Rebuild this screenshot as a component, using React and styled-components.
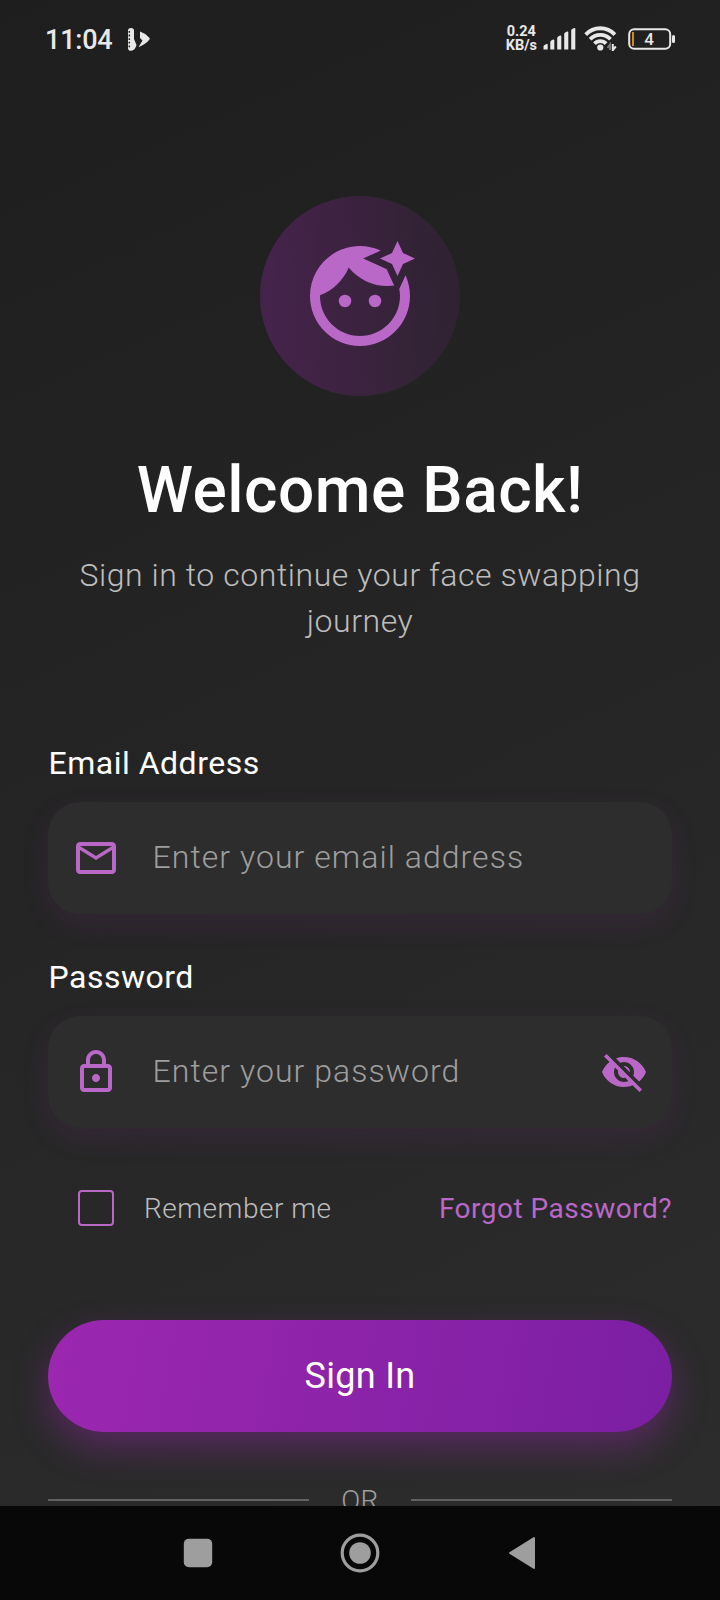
import React from "react";
import styled, { createGlobalStyle } from "styled-components";
import {
  MdFaceRetouchingNatural,
  MdOutlineEmail,
  MdOutlineLock,
  MdVisibilityOff,
} from "react-icons/md";

const GlobalStyle = createGlobalStyle`
  * { box-sizing: border-box; }
  body { margin: 0; background: #1e1e1e; }
`;

const Screen = styled.div`
  width: 720px;
  height: 1600px;
  overflow: hidden;
  display: flex;
  flex-direction: column;
  background: linear-gradient(155.8deg, #1e1e1e, #2d2d2d);
  font-family: Roboto, "Liberation Sans", sans-serif;
  color: #fff;
`;

const StatusBar = styled.header`
  flex: none;
  height: 78px;
  padding: 0 44px 0 45px;
  display: flex;
  align-items: center;
  justify-content: space-between;
  color: #e8e8e8;
`;

const StatusGroup = styled.div`
  display: flex;
  align-items: center;
`;

const Clock = styled.span`
  padding-top: 1px;
  font-size: 27px;
  font-weight: 500;
  line-height: 32px;
  letter-spacing: -0.2px;
  margin-right: 14px;
`;

const NetSpeed = styled.span`
  font-size: 14.5px;
  font-weight: 700;
  line-height: 14px;
  text-align: center;
  white-space: pre-line;
  margin-right: 6px;
`;

const StatusIcon = styled.svg`
  display: block;
  margin-left: ${(p) => p.$gap || 0}px;
`;

const Content = styled.main`
  flex: 1;
  min-height: 0;
  overflow: hidden;
  padding: 118px 48px 0;
  display: flex;
  flex-direction: column;
`;

const Logo = styled.div`
  flex: none;
  align-self: center;
  width: 200px;
  height: 200px;
  border-radius: 50%;
  display: grid;
  place-items: center;
  color: #ba68c8;
  background: linear-gradient(90deg, rgba(156, 39, 176, 0.3), rgba(156, 39, 176, 0.1));
`;

const Title = styled.h1`
  margin: 49px 0 0;
  font-size: 64px;
  font-weight: 500;
  line-height: 92px;
  letter-spacing: 0.5px;
  text-align: center;
`;

const Subtitle = styled.p`
  margin: 15px 0 0;
  font-size: 32px;
  font-weight: 300;
  line-height: 46px;
  letter-spacing: 0.56px;
  text-align: center;
  color: #bdbdbd;
`;

const Field = styled.div`
  display: flex;
  flex-direction: column;
  gap: 16px;
  margin-top: ${(p) => p.$top}px;
`;

const Label = styled.label`
  padding-left: 0.5px;
  font-size: 32px;
  font-weight: 400;
  line-height: 46px;
  letter-spacing: 0.5px;
`;

const InputBox = styled.div`
  height: 112px;
  padding: 0 24px;
  display: flex;
  align-items: center;
  border-radius: 32px;
  background: #2d2d2d;
  box-shadow: 0 10px 28px rgba(156, 39, 176, 0.12);
  color: #ba68c8;
`;

const Placeholder = styled.span`
  flex: 1;
  margin-left: 32.5px;
  padding-bottom: 2px;
  font-size: 32px;
  font-weight: 300;
  letter-spacing: 1.04px;
  color: #9e9e9e;
`;

const Options = styled.div`
  margin-top: 62px;
  height: 36px;
  padding-left: 30px;
  display: flex;
  align-items: center;
`;

const Checkbox = styled.span`
  width: 36px;
  height: 36px;
  border: 2px solid #ba68c8;
  border-radius: 4px;
`;

const Remember = styled.span`
  flex: 1;
  margin-left: 30px;
  font-size: 28px;
  font-weight: 300;
  letter-spacing: 0.5px;
  color: #bdbdbd;
`;

const Forgot = styled.a`
  font-size: 28px;
  font-weight: 400;
  letter-spacing: 0.5px;
  color: #ba68c8;
`;

const SignIn = styled.button`
  flex: none;
  margin-top: 94px;
  height: 112px;
  border: 0;
  border-radius: 56px;
  background: linear-gradient(100.2deg, #9c27b0, #7b1fa2);
  box-shadow: 0 16px 36px rgba(156, 39, 176, 0.4);
  color: #fff;
  font-family: inherit;
  font-size: 36px;
  font-weight: 400;
  letter-spacing: 0.3px;
`;

const Divider = styled.div`
  flex: none;
  margin-top: 48px;
  height: 40px;
  display: flex;
  align-items: center;
  gap: 32px;
  font-size: 28px;
  font-weight: 300;
  letter-spacing: 0.5px;
  color: #9e9e9e;
`;

const Rule = styled.span`
  flex: 1;
  height: 2px;
  background: #616161;
`;

const NavBar = styled.nav`
  flex: none;
  height: 94px;
  background: #080808;
  display: flex;
  justify-content: center;
  align-items: center;
`;

const NavSlot = styled.span`
  width: 162px;
  display: grid;
  place-items: center;
`;

export default function App() {
  return (
    <Screen>
      <GlobalStyle />
      <StatusBar>
        <StatusGroup>
          <Clock>11:04</Clock>
          <StatusIcon width="24" height="25" viewBox="0 0 24 25" fill="#e8e8e8">
            <path d="M1 3.500Q1 1 4 1t3 2.500V12l2.500 6q-1.500 5.500-5.200 5.800Q1 24 1 21z" />
            <path d="M13 4.500q5 1.500 9.300 6.300 1 1 0 2Q19 17 11.500 20.300L15.500 13.500 13 11z" />
            <path d="M2.300 4v17" stroke="#222" strokeWidth="1.500" strokeDasharray="1.800 1.800" />
          </StatusIcon>
        </StatusGroup>
        <StatusGroup>
          <NetSpeed>{"0.24\nKB/s"}</NetSpeed>
          <StatusIcon width="33" height="23" viewBox="0 0 33 23" fill="#e8e8e8">
            <path d="M.500 21.500v-3q0-1 1-1.500l2-1q1.200-.500 1.200.800v4.700z" />
            <path d="M7.300 21.500V14q0-1 1-1.500l1.800-.900q1.200-.500 1.200.800v9.100z" />
            <path d="M14.200 21.500V10q0-1 1-1.500l1.900-.900q1.200-.500 1.200.800v13.100z" />
            <path d="M21.200 21.500V6q0-1 1-1.500l1.900-.900q1.200-.500 1.200.800v17.100z" />
            <path d="M28.200 21.500V2.500q0-1 1-1.500l1.900-.900q1.200-.500 1.200.800v20.600z" />
          </StatusIcon>
          <StatusIcon $gap={8} width="34" height="26" viewBox="0 0 34 26" fill="none" stroke="#e8e8e8" strokeWidth="3.800">
            <path d="M1.700 8.600a20 20 0 0 1 29.200 0" />
            <path d="M6.100 13.200a14 14 0 0 1 20.400 0" />
            <path d="M10.500 17.600a8 8 0 0 1 11.600 0" />
            <circle cx="16.300" cy="21.500" r="3.100" fill="#e8e8e8" stroke="none" />
            <path d="M26 24v-5.500l-2.500 3.500" stroke="#777" strokeWidth="2" />
            <path d="M28.800 18v7M28.800 24l3-3.500" strokeWidth="2" />
          </StatusIcon>
          <StatusIcon $gap={10} width="48" height="22" viewBox="0 0 48 22">
            <rect x="1.200" y="1.200" width="41" height="19.600" rx="5" fill="none" stroke="#e8e8e8" strokeWidth="2" />
            <rect x="4" y="4" width="2" height="14" fill="#d68a17" />
            <rect x="44" y="7" width="3" height="8" rx="1.500" fill="#e8e8e8" />
            <text x="21" y="17" textAnchor="middle" fontSize="17" fontWeight="500" fill="#e8e8e8">4</text>
          </StatusIcon>
        </StatusGroup>
      </StatusBar>
      <Content>
        <Logo>
          <MdFaceRetouchingNatural size={120} />
        </Logo>
        <Title>Welcome Back!</Title>
        <Subtitle>Sign in to continue your face swapping journey</Subtitle>
        <Field $top={96}>
          <Label>Email Address</Label>
          <InputBox>
            <MdOutlineEmail size={48} />
            <Placeholder>Enter your email address</Placeholder>
          </InputBox>
        </Field>
        <Field $top={40}>
          <Label>Password</Label>
          <InputBox>
            <MdOutlineLock size={48} />
            <Placeholder>Enter your password</Placeholder>
            <MdVisibilityOff size={48} />
          </InputBox>
        </Field>
        <Options>
          <Checkbox />
          <Remember>Remember me</Remember>
          <Forgot>Forgot Password?</Forgot>
        </Options>
        <SignIn>Sign In</SignIn>
        <Divider>
          <Rule />
          OR
          <Rule />
        </Divider>
      </Content>
      <NavBar>
        <NavSlot>
          <svg width="30" height="30" viewBox="0 0 30 30">
            <rect x="0.800" y="0.800" width="28.400" height="28.400" rx="5" fill="#9e9e9e" />
          </svg>
        </NavSlot>
        <NavSlot>
          <svg width="40" height="40" viewBox="0 0 40 40">
            <circle cx="20" cy="20" r="17.800" fill="none" stroke="#9e9e9e" strokeWidth="3.200" />
            <circle cx="20" cy="20" r="10.800" fill="#9e9e9e" />
          </svg>
        </NavSlot>
        <NavSlot>
          <svg width="28" height="34" viewBox="0 0 28 34">
            <path d="M2 17L26 2v30z" fill="#9e9e9e" stroke="#9e9e9e" strokeWidth="2" strokeLinejoin="round" />
          </svg>
        </NavSlot>
      </NavBar>
    </Screen>
  );
}
